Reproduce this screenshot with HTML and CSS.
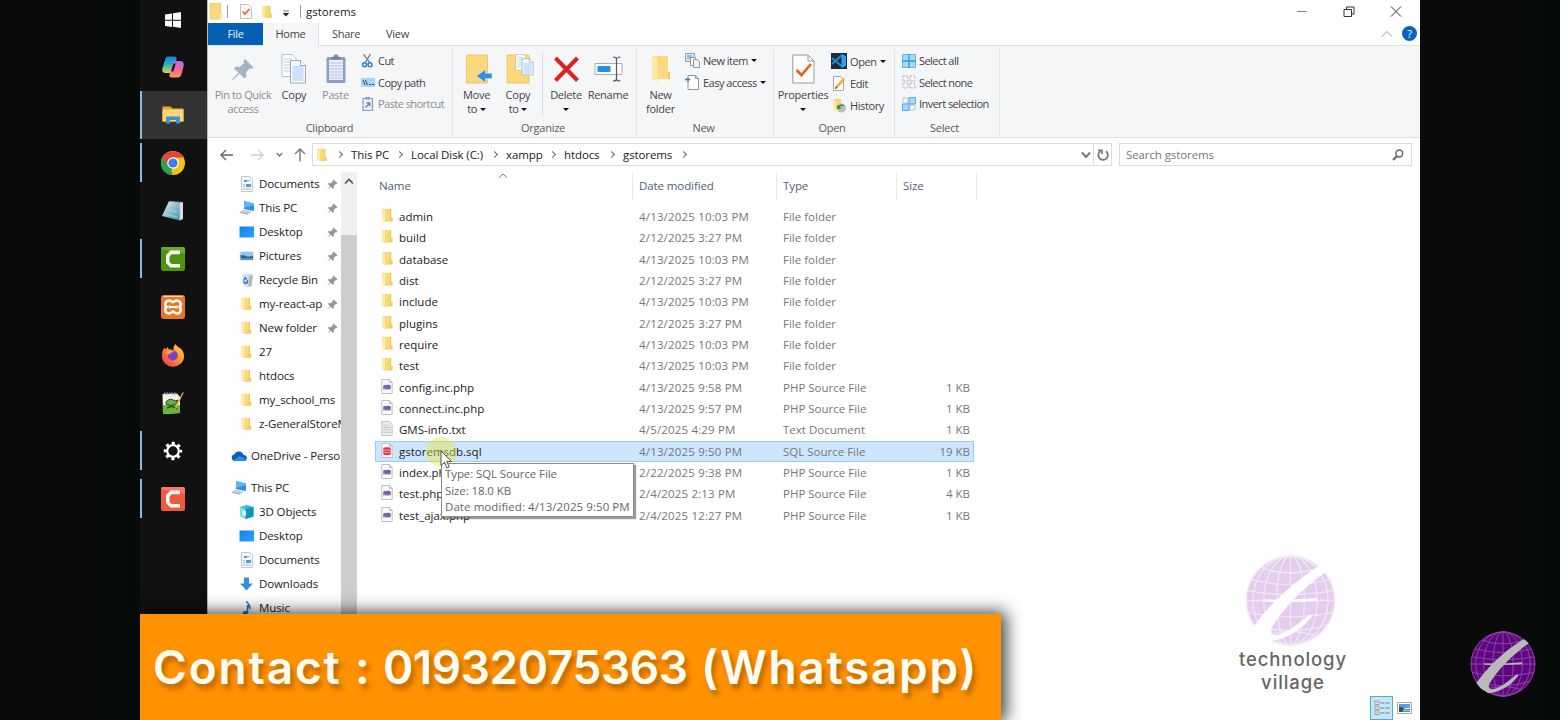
FILE: index.html
```html
<!DOCTYPE html>
<html lang="en">
<head>
<meta charset="utf-8">
<title>gstorems</title>
<link rel="stylesheet" href="styles.css">
</head>
<body>
<svg class="defs" width="0" height="0">
  <defs>
    <linearGradient id="gblue" x1="0" y1="0" x2="1" y2="1"><stop offset="0" stop-color="#0a84e8"/><stop offset="1" stop-color="#2fa4fb"/></linearGradient>
    <linearGradient id="gcopa" x1="0" y1="0" x2="0" y2="1"><stop offset="0" stop-color="#1c7fe0"/><stop offset=".5" stop-color="#2fb4b8"/><stop offset="1" stop-color="#e9cf3c"/></linearGradient>
    <linearGradient id="gcopb" x1="0" y1="0" x2="0" y2="1"><stop offset="0" stop-color="#b569e8"/><stop offset=".5" stop-color="#f0659a"/><stop offset="1" stop-color="#fb9a55"/></linearGradient>
    <linearGradient id="gff" x1="1" y1="0" x2="0" y2="1"><stop offset="0" stop-color="#ffe14a"/><stop offset=".5" stop-color="#ff8a2a"/><stop offset="1" stop-color="#f5285e"/></linearGradient>
    <linearGradient id="gnote" x1="0" y1="0" x2="1" y2="1"><stop offset="0" stop-color="#e6f3f6"/><stop offset="1" stop-color="#3f8ea6"/></linearGradient>
  </defs>
  <symbol id="folder" viewBox="0 0 14 16"><path d="M2 1h9.500v9H13v4.500H5z" fill="#f3c863"/><path d="M2 1h8v12.500H2z" fill="#f9d978"/><path d="M2 1l3 1.500V15.500L2 13.500z" fill="#ffebae"/></symbol>
  <symbol id="page" viewBox="0 0 14 16"><path d="M1.500.5h8l3 3v12h-11z" fill="#fbfbfd" stroke="#b9b9c0"/><path d="M9.500.5v3h3" fill="none" stroke="#b9b9c0"/></symbol>
  <symbol id="php" viewBox="0 0 14 16"><use href="#page"/><path d="M3 7c1-.8 2-.8 3-.4 1.500-.6 4.800-.5 5 .9v3.500h-1V9.500l-1 2H7.700V10.500H6.500v1H5V10l-.7-.5V11H3z" fill="#7a5fae"/></symbol>
  <symbol id="sql" viewBox="0 0 14 16"><use href="#page"/><path d="M3 5.500c0-1.300 8-1.300 8 0v6.500c0 1.300-8 1.300-8 0z" fill="#e6394f"/><path d="M3 7c2 1 6 1 8 0M3 9.500c2 1 6 1 8 0" stroke="#fff" stroke-width=".7" fill="none" opacity=".7"/></symbol>
  <symbol id="txt" viewBox="0 0 14 16"><path d="M1.500.5h8l3 3v12h-11z" fill="#eeeeef" stroke="#c0c0c0"/><path d="M3 4.500h6M3 7h8M3 9.500h8M3 12h8" stroke="#bcc0c3"/></symbol>
  <symbol id="doc" viewBox="0 0 16 16"><path d="M2.500.5h8l3 3v12h-11z" fill="#f6f9fc" stroke="#c3c7cc"/><path d="M5 4h3v2H5zM7 8h5v3H7z" fill="#4b9fdc"/><path d="M8 4.500h3M4 8.500h2M4 10.500h2M4 13h8" stroke="#9dbbd3"/></symbol>
  <symbol id="pc" viewBox="0 0 16 16"><path d="M5 1l10 2.500V11L5 9z" fill="#2491ea"/><path d="M5 1l10 2.500V5L5 8z" fill="#5db5f7"/><path d="M4.500 9.500l9 2-4.500 3-9-2z" fill="#c8ced3"/><path d="M1 12.400l8 1.600" stroke="#8d979f" stroke-width=".7"/></symbol>
  <symbol id="desk" viewBox="0 0 16 16"><path d="M.5 2.500h14.500v11H.5z" fill="url(#gblue)"/></symbol>
  <symbol id="pic" viewBox="0 0 16 16"><path d="M.5 3h14.500v10H.5z" fill="#e2edf5"/><path d="M1.500 4h12.500v4H1.500z" fill="#8fc6ec"/><path d="M1.500 7l4 .5 3 1 5.500-.5v2.500H1.500z" fill="#2b5f85"/><path d="M1.500 10h12.500v2H1.500z" fill="#5a94bd"/></symbol>
  <symbol id="bin" viewBox="0 0 16 16"><path d="M3 3l7-2 4 2-1.500 11-4 1.500L4 13z" fill="#d9dfe4"/><path d="M10 4l4-1-1.500 11-3 1z" fill="#aeb8c0"/><path d="M4.500 8.500l1.700-2.700 1.700 1.700M8.500 8l-.3 3H5.500L4.700 9" fill="none" stroke="#1c77d2" stroke-width="1.300"/></symbol>
  <symbol id="cloud" viewBox="0 0 16 16"><path d="M3.500 13a3.500 3.500 0 0 1-.2-6.800A5 5 0 0 1 12.500 7 3 3 0 0 1 13 13z" fill="#0f5fbf"/><path d="M2 12.500L8.500 8l6.800 3.500c-.5 1-1.300 1.500-2.300 1.500H3.500z" fill="#2191e8"/></symbol>
  <symbol id="cube" viewBox="0 0 16 16"><path d="M1 3l7-2 6.500 2v9.500L7 15 1 12z" fill="#37b7d8"/><path d="M1 3l5.500 2V15L1 12z" fill="#7be0ee"/><path d="M6.500 5l8-2v9.500L6.500 15z" fill="#1693bd"/><path d="M3.500 6l3.500 1v5L3.500 11z" fill="#dff9fc"/></symbol>
  <symbol id="down" viewBox="0 0 16 16"><path d="M5 1.500h5v6h4L7.500 14.500 1 7.500h4z" fill="#3a8fdc"/></symbol>
  <symbol id="music" viewBox="0 0 16 16"><path d="M7.500 1c.5 3 4.500 3.500 3.500 8-.5-2-1.700-3-2.500-3.200V13" fill="none" stroke="#1d7fc4" stroke-width="1.500"/><ellipse cx="6.300" cy="13" rx="2.700" ry="2" fill="#1d7fc4"/></symbol>
  <symbol id="pin" viewBox="0 0 11 11"><path d="M6.500.5l4 4-1 .8-.8-.2-2 2 .2 2-1 .9-2.300-2.300L.7 10.600l-.3-.3L3.200 7.300.9 5l.9-1 2.100.2 2-2-.3-.9z" fill="#8f969e"/></symbol>
  <symbol id="twin" viewBox="0 0 26 30"><path d="M1 .5h10l4 4v18H1z" fill="#fff" stroke="#a9adb3" stroke-width=".8"/><path d="M3 5h8M3 8h9M3 11h9M3 14h9M3 17h9" stroke="#a9cbea"/><path d="M9.500 6.500h10l5 5v17.500h-15z" fill="#f8fbfe" stroke="#8c949c" stroke-width=".8"/><path d="M11.500 12h11v15h-11z" fill="#cbe3f8"/><path d="M19.500 6.500v5h5" fill="#fff" stroke="#8c949c" stroke-width=".8"/></symbol>
  <symbol id="globe" viewBox="0 0 92 92">
    <circle cx="46" cy="46" r="45" class="g-fill"/>
    <g class="g-line"><path d="M46 1v90M1 46h90M7 25q39 10 78 0M3 36q43 8 86 0M3 58q43 9 86 0M8 70q38 13 76 0M17 13q29 10 58 0M20 82q26-9 52 0"/><ellipse cx="46" cy="46" rx="14" ry="45"/><ellipse cx="46" cy="46" rx="27" ry="45"/><ellipse cx="46" cy="46" rx="38" ry="45"/><circle cx="46" cy="46" r="44.500"/></g>
    <path class="g-mark" d="M75 11C50 26 22 52 9 73L15 80 25 86.500C38 87 58 76 67.500 62L66 60C54 69 42 80 32 81 25 81.500 25 77 28 72 39 54 60 32 82 17z"/>
    <path class="g-mark" d="M20 45q26 1 52-1.500l1 3q-27 1.500-53 .5z"/>
  </symbol>
</svg>

<div class="stage">
  <div class="bezel"></div>
  <div class="screen">
    <div class="taskbar">
      <div class="task"><svg width="24" height="24" viewBox="0 0 24 24"><path d="M4 6.500l7-1v6.200H4zM12 5.300L20 4v7.700h-8zM4 12.700h7v6.200l-7-1zM12 12.700h8V20l-8-1.200z" fill="#fff"/></svg></div>
      <div class="task"><svg width="24" height="24" viewBox="0 0 24 24"><path d="M7 1.500h6c2 0 3 1 2.500 3L12 15.500c-.6 1.600-1.500 2.500-3 2.500H5c-3 0-4.500-1.500-3.500-5L4 5C4.500 2.500 5.500 1.500 7 1.500z" fill="url(#gcopa)"/><path d="M15 6h4c3 0 4.500 2 3.500 5.500l-2 7.500c-.7 2.500-2 3.500-4 3.500h-6c-2 0-2.500-1.500-2-3l3-10C12.200 7.500 13 6 15 6z" fill="url(#gcopb)"/><path d="M12.500 8.500h2.200l-2.400 8h-2.200z" fill="#151515"/></svg></div>
      <div class="task task--active"><svg width="24" height="24" viewBox="0 0 24 24"><path d="M1.500 3.500h8l2 2h11v13h-21z" fill="#e9a62c"/><path d="M1.500 6.500h21v12h-21z" fill="#ffd575"/><path d="M5 20.500v-7h14v7h-4v-3.500H9v3.500z" fill="#3b93d6"/></svg></div>
      <div class="task task--open"><svg width="24" height="24" viewBox="0 0 24 24"><circle cx="12" cy="12" r="12" fill="#fbc116"/><path d="M12 12l-.2 12A12 12 0 0 1 1.600 6L7 15z" fill="#2ba24c"/><path d="M12 24l5-9-5-3-5 3 4 6z" fill="#fbc116"/><path d="M1.600 6A12 12 0 0 1 22.400 6.500H12L7 15z" fill="#e94335"/><path d="M1.600 6L7 15l4.500 2.500L8 23.300A12 12 0 0 1 1.600 6z" fill="#2ba24c"/><circle cx="12" cy="12" r="5.800" fill="#fff"/><circle cx="12" cy="12" r="4.600" fill="#3b7ded"/></svg></div>
      <div class="task"><svg width="24" height="24" viewBox="0 0 24 24"><path d="M8 2l11 1 0 18.500L1 17z" fill="url(#gnote)"/><path d="M19 3l3 .3V20l-3.500 1.500z" fill="#d8dcdc"/><path d="M8 2.500l13 .8" stroke="#8b6f5a" stroke-dasharray="1.500 1.200"/><path d="M5 11l12 2M3 15l14 3" stroke="#a9d6e0" stroke-width=".8"/></svg></div>
      <div class="task task--open"><svg width="24" height="24" viewBox="0 0 24 24"><rect width="24" height="24" rx="2" fill="#4c940c"/><path d="M0 2a2 2 0 0 1 2-2h20a2 2 0 0 1 2 2v5z" fill="#69ad20"/><path d="M19 3.500v3.800h-8.500L8.500 9.500v5.500l2 2H19v3.500H9.500l-4.500-4.500V8l4.500-4.500z" fill="#fff"/></svg></div>
      <div class="task"><svg width="24" height="24" viewBox="0 0 24 24"><rect width="24" height="24" rx="3" fill="#ee7522"/><path d="M2 1.500h20" stroke="#ffd1a8" stroke-width="1.200"/><path d="M8.500 5.500c1.500 0 2.500 1.500 3.500 1.500s2-1.500 3.500-1.500c4 0 5.500 4 3 6.500 2.500 2.500 1 6.500-3 6.500-1.500 0-2.500-2-3.500-2s-2 2-3.500 2c-4 0-5.500-4-3-6.500-2.500-2.500-1-6.500 3-6.500z" fill="none" stroke="#fff" stroke-width="2.500"/><path d="M8.500 10.500v3M15.500 10.500v3M8.500 12h7" stroke="#fff" stroke-width="2"/></svg></div>
      <div class="task"><svg width="24" height="24" viewBox="0 0 24 24"><path d="M3 5l2 1 1.500-2L8 6.500C10 6 11 7 12 8l1-5 1.500-2C16 4 18 4 20 6c2 2 3 4 3 7.500A11 10.500 0 0 1 1 13c0-3 .5-6 2-8z" fill="url(#gff)"/><circle cx="11.800" cy="12.500" r="5" fill="#7543c8"/><path d="M5 9c3-2.500 7-2 8 0-3 0-3.500 2-6 2.500z" fill="#ffa03a"/></svg></div>
      <div class="task"><svg width="24" height="24" viewBox="0 0 24 24"><path d="M1.500 3l14.500-.5L19 6v16L2 23z" fill="#edf3ea"/><path d="M2 14h17v8L2 23z" fill="#6db832"/><path d="M3 2.500h12" stroke="#9a9a9a" stroke-dasharray="1.500 1" stroke-width="2"/><path d="M5 11q4-5 9-1l3-1-2 4q-5 3-10 0z" fill="#6fae3e" stroke="#204d18"/><path d="M6 17l5-2 5 3" stroke="#1c4f1a" stroke-width="1.500" fill="none"/><path d="M23 1l-7.500 16-1 2.500L14 17 21 2z" fill="#e7a53e"/></svg></div>
      <div class="task task--open"><svg width="24" height="24" viewBox="0 0 24 24"><circle cx="12" cy="12" r="5.800" fill="none" stroke="#fff" stroke-width="2.200"/><circle cx="12" cy="12" r="7.700" fill="none" stroke="#fff" stroke-width="3" stroke-dasharray="3 3.048" stroke-dashoffset="1.500"/></svg></div>
      <div class="task task--open"><svg width="24" height="24" viewBox="0 0 24 24"><rect width="24" height="24" rx="2" fill="#f2593b"/><path d="M0 2a2 2 0 0 1 2-2h20a2 2 0 0 1 2 2v5z" fill="#fb7a5c"/><path d="M19 3.500v3.800h-8.500L8.500 9.500v5.500l2 2H19v3.500H9.500l-4.500-4.500V8l4.500-4.500z" fill="#fff"/></svg></div>
    </div>

    <div class="window">
      <header class="titlebar">
        <svg class="t-folder" width="15" height="17" viewBox="0 0 15 17"><path d="M1 .5h10.500V11H13v5H1z" fill="#f9d97e" stroke="#e8c263" stroke-width=".8"/><path d="M11 11h2v5h-2z" fill="#ffefc0"/></svg>
        <i class="bar"></i>
        <svg class="t-check" width="12" height="15" viewBox="0 0 12 15"><path d="M.5.500h8l3 3v11H.5z" fill="#fafafa" stroke="#c3c3c3"/><path d="M2.500 7.500L5 10l4.500-5" fill="none" stroke="#e3622a" stroke-width="1.600"/></svg>
        <svg class="t-f2" width="13" height="14"><use href="#folder"/></svg>
        <svg class="t-drop" width="8" height="8" viewBox="0 0 8 8"><path d="M1 1h6" stroke="#777"/><path d="M.8 3h6.400L4 6.500z" fill="#222"/></svg>
        <i class="bar bar--2"></i>
        <span class="title">gstorems</span>
        <div class="winbtns">
          <svg width="12" height="12" viewBox="0 0 12 12"><path d="M1 5.500h10" stroke="#888"/></svg>
          <svg width="12" height="12" viewBox="0 0 12 12"><path d="M1 3.500h7.500V10.500H1zM3.500 3.500V1H11v7H8.500" fill="none" stroke="#333"/></svg>
          <svg width="12" height="12" viewBox="0 0 12 12"><path d="M1 .5l10 10M11 .5L1 10.500" stroke="#333"/></svg>
        </div>
      </header>
      <nav class="tabs">
        <span class="tab tab--file">File</span><span class="tab tab--home">Home</span><span class="tab tab--share">Share</span><span class="tab tab--view">View</span>
        <div class="tabs-right">
          <svg width="12" height="8" viewBox="0 0 12 8"><path d="M1 6.500l5-5 5 5" fill="none" stroke="#999"/></svg>
          <span class="help">?</span>
        </div>
      </nav>

      <section class="ribbon">
        <div class="group g-clip">
          <div class="cmds">
            <div class="big w60 dim"><svg width="24" height="30" viewBox="0 0 24 30"><path d="M14 5l8.500 8.500-2 1.500-2-.5-3.500 4 .5 4-2 2-5-5L2 26l-.8-.8L7.500 18.500 3 14.500l1.800-2 4 .5L13 9l-.5-2.500z" fill="#a5b2ca"/></svg><span>Pin to Quick<br>access</span></div>
            <div class="big w42"><svg width="26" height="30"><use href="#twin"/></svg><span>Copy</span></div>
            <div class="big w40 dim"><svg width="22" height="30" viewBox="0 0 22 30"><rect x="1.500" y="3" width="19" height="26" rx="1.500" fill="#8e9fc4"/><path d="M4 6h14v20H4z" fill="#e9eef8"/><path d="M4 9h14M4 12h14M4 15h14M4 18h14M4 21h14M4 24h14" stroke="#b9c5e0"/><path d="M6 5.500V3h2.500a2.500 2.500 0 0 1 5 0H16v2.500z" fill="#77859f"/></svg><span>Paste</span></div>
            <div class="small">
              <div><svg width="14" height="14" viewBox="0 0 14 14"><path d="M2.500 0L9 9M9.500 0L4 9" stroke="#7d8792" stroke-width="1.400"/><circle cx="3.500" cy="10.800" r="2" fill="none" stroke="#2683cf" stroke-width="1.500"/><circle cx="9" cy="10.800" r="2" fill="none" stroke="#2683cf" stroke-width="1.500"/></svg>Cut</div>
              <div><svg width="14" height="9" viewBox="0 0 14 9"><path d="M0 0h14v9H0z" fill="#a9d6f7"/><path d="M2 2l2 5M4.500 2l2 5M8 6.500h2M11 6.500h2" stroke="#1c4b78"/></svg>Copy path</div>
              <div class="dim"><svg width="14" height="15" viewBox="0 0 14 15"><path d="M2 2.500h9.500v12H2z" fill="#e9eef8" stroke="#8b9cc0" stroke-width="1.200"/><path d="M4.500 1h4.500v2.500H4.500z" fill="#8b9cc0"/><path d="M4.500 11.500l4-4M5.500 7h3.300v3.300" stroke="#6e82ad" stroke-width="1.300" fill="none"/></svg>Paste shortcut</div>
            </div>
          </div>
          <p>Clipboard</p>
        </div>
        <div class="group g-org">
          <div class="cmds">
            <div class="big w40"><svg class="nudge" width="28" height="30" viewBox="0 0 28 30"><path d="M1.500 1h21v28h-21z" fill="#fbd87c" stroke="#efc865"/><path d="M20.500 15.500v3.800h6.500v5.200h-6.500V28.500l-9-6.500z" fill="#2f8fe0" stroke="#fff" stroke-width=".4"/></svg><span>Move<br>to <b></b></span></div>
            <div class="big w42"><svg class="nudge" width="28" height="30" viewBox="0 0 28 30"><path d="M1 1h22v28H1z" fill="#fbd87c" stroke="#efc865"/><g transform="translate(9 0) scale(.74 .72)"><use href="#twin" width="26" height="30"/></g></svg><span>Copy<br>to <b></b></span></div>
            <i class="vsep"></i>
            <div class="big w42"><svg width="28" height="30" viewBox="0 0 28 30"><path d="M3.500 4L25.500 26.500M25.500 4L3.500 26.500" stroke="#df2020" stroke-width="4"/></svg><span>Delete<br><b></b></span></div>
            <div class="big w42"><svg width="29" height="30" viewBox="0 0 29 30"><path d="M1 9.500h27v11H1z" fill="#fff" stroke="#a8adb2"/><path d="M3.500 12h13v6h-13z" fill="#2c8fe6"/><path d="M19 3c2 0 3.500.5 3.500 2v20c0 1.500-1.500 2-3.500 2M26.500 3c-2 0-4 .5-4 2M22.500 25c0 1.500 2 2 4 2" fill="none" stroke="#555" stroke-width="1.200"/></svg><span>Rename</span></div>
          </div>
          <p>Organize</p>
        </div>
        <div class="group g-new">
          <div class="cmds">
            <div class="big w40"><svg width="20" height="30" viewBox="0 0 20 30"><path d="M3 2h14v16h2v7H6z" fill="#f2c763"/><path d="M4 2h13v23H4z" fill="#fbd97f"/><path d="M1 1.500l5.500 3v24L1 25z" fill="#ffe9a8"/></svg><span>New<br>folder</span></div>
            <div class="small">
              <div><svg width="15" height="15" viewBox="0 0 15 15"><path d="M.5.500h9v8h-9z" fill="#d5e7f5" stroke="#8aa2b6"/><path d="M2 3h5M2 5h5" stroke="#4a90c8"/><path d="M5.500 4.500h5v8h-5z" fill="#fff" stroke="#999"/><path d="M8.500 6.500h4l2 2v6h-6z" fill="#e8f1f8" stroke="#999"/></svg>New item <b></b></div>
              <div><svg width="15" height="15" viewBox="0 0 15 15"><path d="M3 .5h7.500l3 3v11H3z" fill="#fff" stroke="#8f959b"/><path d="M10.500.5v3h3" fill="none" stroke="#8f959b"/><path d="M0 5q3-2 5 0M3 3v4" fill="none" stroke="#2683cf" stroke-width="1.300"/></svg>Easy access <b></b></div>
            </div>
          </div>
          <p>New</p>
        </div>
        <div class="group g-open">
          <div class="cmds">
            <div class="big w54"><svg width="23" height="30" viewBox="0 0 23 30"><path d="M.8 1H16l6 6v22H.8z" fill="#fdfdfd" stroke="#9b9b9b"/><path d="M16 1v6h6" fill="none" stroke="#9b9b9b"/><path d="M4.500 16l5 5L19 10" fill="none" stroke="#e5611f" stroke-width="2.600"/></svg><span>Properties<br><b></b></span></div>
            <div class="small">
              <div><svg width="16" height="16" viewBox="0 0 16 16"><path d="M0 0h16v16H0z" fill="#1f2a36"/><path d="M1 5l10 8.500M1 11L11 2" stroke="#1c86d4" stroke-width="2.200"/><path d="M10.500 1L15 3v10l-4.500 2z" fill="#2ba0ee"/></svg>Open <b></b></div>
              <div><svg width="16" height="15" viewBox="0 0 16 15"><path d="M2.500.500h7l3 3v11h-10z" fill="#fff" stroke="#a5a5a5"/><path d="M4 13l.8-3L12 2l2 2-7.500 8z" fill="#eab23c"/><path d="M4 13l.8-3 1.700 2z" fill="#555"/></svg>Edit</div>
              <div><svg width="16" height="15" viewBox="0 0 16 15"><path d="M2 1h8v11H2z" fill="#f8d471"/><path d="M2 1l3 1.500V14L2 12z" fill="#ffe9a8"/><circle cx="10.500" cy="10" r="4.500" fill="#b9bfbf"/><path d="M7.500 9.500a3 3 0 0 1 5-1.500M6.500 7.500l.6 2.800 2.700-.6" fill="none" stroke="#2f8f2f" stroke-width="1.500"/></svg>History</div>
            </div>
          </div>
          <p>Open</p>
        </div>
        <div class="group g-sel">
          <div class="cmds">
            <div class="small">
              <div><svg width="14" height="14" viewBox="0 0 14 14"><path d="M.5.500h13v13H.5z" fill="#a8d6fa" stroke="#6cb1e8"/><path d="M7 0v14M0 7h14" stroke="#3f93da" stroke-width="1.300"/></svg>Select all</div>
              <div><svg width="14" height="14" viewBox="0 0 14 14"><path d="M1 1h5v5H1zM8 1h5v5H8zM1 8h5v5H1zM8 8h5v5H8z" fill="#f8f8f8" stroke="#b5b5b5" stroke-dasharray="2 1"/></svg>Select none</div>
              <div><svg width="14" height="14" viewBox="0 0 14 14"><path d="M1 1h5v5H1zM8 8h5v5H8z" fill="#fafafa" stroke="#b9bec4"/><path d="M7 .5h6.500V7H7zM.5 7H7v6.500H.5z" fill="#a8d6fa" stroke="#62a9e2"/></svg>Invert selection</div>
            </div>
          </div>
          <p>Select</p>
        </div>
      </section>

      <div class="address">
        <svg class="a-back" width="13" height="12" viewBox="0 0 13 12"><path d="M6 1L1 6l5 5M1 6h12" fill="none" stroke="#666" stroke-width="1.400"/></svg>
        <svg class="a-fwd" width="13" height="12" viewBox="0 0 13 12"><path d="M7 1l5 5-5 5M12 6H0" fill="none" stroke="#d0d0d0" stroke-width="1.400"/></svg>
        <svg class="a-drop" width="7" height="6" viewBox="0 0 7 6"><path d="M.8 1l2.700 3L6.200 1" fill="none" stroke="#777" stroke-width="1.500"/></svg>
        <svg class="a-up" width="12" height="14" viewBox="0 0 12 14"><path d="M1 6l5-5 5 5M6 1v12.500" fill="none" stroke="#777" stroke-width="1.400"/></svg>
        <div class="path">
          <svg class="p-f" width="13" height="14"><use href="#folder"/></svg>
          <i></i><span class="c1">This PC</span><i></i><span class="c2">Local Disk (C:)</span><i></i><span class="c3">xampp</span><i></i><span class="c4">htdocs</span><i></i><span class="c5">gstorems</span><i></i>
          <svg class="p-drop" width="10" height="8" viewBox="0 0 10 8"><path d="M1 1.500L5 6l4-4.500" fill="none" stroke="#777" stroke-width="2"/></svg>
        </div>
        <div class="refresh"><svg width="12" height="12" viewBox="0 0 12 12"><path d="M9 2.200A4.800 4.800 0 1 1 3.500 2" fill="none" stroke="#777" stroke-width="1.700"/><path d="M1 1.300h4v4" fill="none" stroke="#777" stroke-width="1.600"/></svg></div>
        <div class="search"><span>Search gstorems</span><svg width="12" height="12" viewBox="0 0 12 12"><circle cx="7.300" cy="4.500" r="3.400" fill="none" stroke="#666" stroke-width="1.500"/><path d="M5 7L1 11" stroke="#666" stroke-width="2"/></svg></div>
      </div>

      <main class="content">
        <aside class="tree">
          <div class="node"><svg><use href="#doc"/></svg><span>Documents</span><svg class="pin"><use href="#pin"/></svg></div>
          <div class="node"><svg><use href="#pc"/></svg><span>This PC</span><svg class="pin"><use href="#pin"/></svg></div>
          <div class="node"><svg><use href="#desk"/></svg><span>Desktop</span><svg class="pin"><use href="#pin"/></svg></div>
          <div class="node"><svg><use href="#pic"/></svg><span>Pictures</span><svg class="pin"><use href="#pin"/></svg></div>
          <div class="node"><svg><use href="#bin"/></svg><span>Recycle Bin</span><svg class="pin"><use href="#pin"/></svg></div>
          <div class="node"><svg class="f"><use href="#folder"/></svg><span>my-react-ap</span><svg class="pin"><use href="#pin"/></svg></div>
          <div class="node"><svg class="f"><use href="#folder"/></svg><span>New folder</span><svg class="pin"><use href="#pin"/></svg></div>
          <div class="node"><svg class="f"><use href="#folder"/></svg><span>27</span></div>
          <div class="node"><svg class="f"><use href="#folder"/></svg><span>htdocs</span></div>
          <div class="node"><svg class="f"><use href="#folder"/></svg><span>my_school_ms</span></div>
          <div class="node"><svg class="f"><use href="#folder"/></svg><span>z-GeneralStoreM</span></div>
          <div class="node node--root"><svg><use href="#cloud"/></svg><span>OneDrive - Perso</span></div>
          <div class="node node--root"><svg><use href="#pc"/></svg><span>This PC</span></div>
          <div class="node"><svg><use href="#cube"/></svg><span>3D Objects</span></div>
          <div class="node"><svg><use href="#desk"/></svg><span>Desktop</span></div>
          <div class="node"><svg><use href="#doc"/></svg><span>Documents</span></div>
          <div class="node"><svg><use href="#down"/></svg><span>Downloads</span></div>
          <div class="node"><svg><use href="#music"/></svg><span>Music</span></div>
        </aside>
        <div class="scroll"><svg width="10" height="7" viewBox="0 0 10 7"><path d="M1 5.500l4-4 4 4" fill="none" stroke="#555" stroke-width="1.700"/></svg><div class="thumb"></div></div>
        <section class="files">
          <div class="head"><svg class="sort" width="10" height="5" viewBox="0 0 10 5"><path d="M1 4.500l4-3.500 4 3.500" fill="none" stroke="#777"/></svg><span>Name</span><span>Date modified</span><span>Type</span><span>Size</span></div>
          <div class="row"><svg><use href="#folder"/></svg><span>admin</span><span>4/13/2025 10:03 PM</span><span>File folder</span><span></span></div>
          <div class="row"><svg><use href="#folder"/></svg><span>build</span><span>2/12/2025 3:27 PM</span><span>File folder</span><span></span></div>
          <div class="row"><svg><use href="#folder"/></svg><span>database</span><span>4/13/2025 10:03 PM</span><span>File folder</span><span></span></div>
          <div class="row"><svg><use href="#folder"/></svg><span>dist</span><span>2/12/2025 3:27 PM</span><span>File folder</span><span></span></div>
          <div class="row"><svg><use href="#folder"/></svg><span>include</span><span>4/13/2025 10:03 PM</span><span>File folder</span><span></span></div>
          <div class="row"><svg><use href="#folder"/></svg><span>plugins</span><span>2/12/2025 3:27 PM</span><span>File folder</span><span></span></div>
          <div class="row"><svg><use href="#folder"/></svg><span>require</span><span>4/13/2025 10:03 PM</span><span>File folder</span><span></span></div>
          <div class="row"><svg><use href="#folder"/></svg><span>test</span><span>4/13/2025 10:03 PM</span><span>File folder</span><span></span></div>
          <div class="row"><svg><use href="#php"/></svg><span>config.inc.php</span><span>4/13/2025 9:58 PM</span><span>PHP Source File</span><span>1 KB</span></div>
          <div class="row"><svg><use href="#php"/></svg><span>connect.inc.php</span><span>4/13/2025 9:57 PM</span><span>PHP Source File</span><span>1 KB</span></div>
          <div class="row"><svg><use href="#txt"/></svg><span>GMS-info.txt</span><span>4/5/2025 4:29 PM</span><span>Text Document</span><span>1 KB</span></div>
          <div class="row row--sel"><svg><use href="#sql"/></svg><span>gstoremsdb.sql</span><span>4/13/2025 9:50 PM</span><span>SQL Source File</span><span>19 KB</span></div>
          <div class="row"><svg><use href="#php"/></svg><span>index.php</span><span>2/22/2025 9:38 PM</span><span>PHP Source File</span><span>1 KB</span></div>
          <div class="row"><svg><use href="#php"/></svg><span>test.php</span><span>2/4/2025 2:13 PM</span><span>PHP Source File</span><span>4 KB</span></div>
          <div class="row"><svg><use href="#php"/></svg><span>test_ajax.php</span><span>2/4/2025 12:27 PM</span><span>PHP Source File</span><span>1 KB</span></div>
        </section>
      </main>
    </div>

    <div class="halo"></div>
    <div class="tooltip">Type: SQL Source File<br>Size: 18.0 KB<br><span>Date modified: 4/13/2025 9:50 PM</span></div>
    <svg class="cursor" width="14" height="20" viewBox="0 0 14 20"><path d="M1 1v14.500l3.500-3.200 2.300 5.700 2.400-1-2.400-5.500h4.700z" fill="#fff" stroke="#444" stroke-width=".9"/></svg>

    <div class="watermark"><svg class="globe" width="91" height="91"><use href="#globe"/></svg><span>technology<br>village</span></div>
    <div class="views">
      <span class="view view--on"><svg width="16" height="16" viewBox="0 0 16 16"><path d="M1 1h4v3.500H1zM1 6h4v3.500H1zM1 11h4v3.500H1z" fill="#fff" stroke="#888" stroke-width=".8"/><path d="M2.500 2.800h1M2.500 7.800h1M2.500 12.800h1" stroke="#a33"/><path d="M6.500 3h4M6.500 8h4M6.500 13h4M11.500 3h4M11.500 8h4M11.500 13h4" stroke="#5a86a0"/></svg></span>
      <span class="view"><svg width="15" height="12" viewBox="0 0 15 12"><path d="M.5.500h14v11H.5z" fill="#fff" stroke="#aaa"/><path d="M2 2h11v4H2z" fill="#5d9be0"/><path d="M2 4.500q4 0 6 2.500h5v3H2z" fill="#2b5a62"/><path d="M6 7.500h7v2H6z" fill="#9cc3dc"/></svg></span>
    </div>
    <div class="banner"><p><span class="wide">Contact :</span> <span class="digits">01932075363</span> <span class="app">(Whatsapp)</span></p></div>
  </div>
  <div class="bezel bezel--r"><svg class="globe globe--dark" width="66" height="66"><use href="#globe"/></svg></div>
</div>
</body>
</html>
```

FILE: styles.css
```css
* { box-sizing: border-box; }
body { margin: 0; background: #080b09; font-family: "Open Sans", "Noto Sans", sans-serif; font-size: 11.5px; letter-spacing: -0.1px; color: #222; }
.defs { position: absolute; }
svg { flex: none; display: block; }
.stage { display: flex; width: 1560px; height: 720px; overflow: hidden; }
.bezel { width: 140px; background: linear-gradient(90deg, #0a0c0b, #060a08); }
.bezel--r { display: flex; align-items: flex-end; padding: 0 0 23px 50px; }
.screen { position: relative; display: flex; width: 1280px; height: 720px; background: #fff; overflow: hidden; }

.taskbar { width: 67px; background: #111; display: flex; flex-direction: column; }
.task { height: 48px; flex: none; display: flex; align-items: center; justify-content: center; border-left: 2px solid transparent; padding-right: 3px; padding-bottom: 1px; }
.task:first-child { height: 43px; padding-bottom: 3px; }
.task--active { background: #333; border-left-color: #86b9e4; }
.task--open { background: linear-gradient(#86b9e4, #86b9e4) -2px 4px / 2px 39px no-repeat; background-origin: padding-box; background-clip: border-box; }

.window { width: 1213px; display: flex; flex-direction: column; border-left: 1px solid #b9b9b9; background: #fff; }
.titlebar { height: 23px; display: flex; align-items: center; }
.t-folder { margin-left: 1px; }
.bar { width: 1px; height: 13px; background: #999; margin-left: 3px; }
.t-check { margin-left: 12px; }
.t-f2 { margin-left: 8px; }
.t-drop { margin: 4px 0 0 9px; }
.bar--2 { margin-left: 10px; }
.title { font-size: 11.5px; margin-left: 5px; letter-spacing: 0; }
.winbtns { margin-left: auto; display: flex; gap: 35px; padding-right: 18px; }
.tabs { height: 23px; display: flex; align-items: stretch; border-bottom: 1px solid #dfe1e4; font-size: 11px; color: #444; letter-spacing: -0.3px; }
.tab { display: flex; align-items: center; justify-content: center; padding-bottom: 1px; }
.tab--file { width: 55px; background: #0560b4; color: #e5f0fa; }
.tab--home { width: 56px; background: #f5f6f8; border-right: 1px solid #dfe1e4; margin-bottom: -1px; padding-bottom: 2px; }
.tab--share { width: 54px; }
.tab--view { width: 49px; }
.tabs-right { margin-left: auto; display: flex; align-items: center; gap: 9px; padding: 0 3px 1px 0; }
.help { width: 15px; height: 15px; border-radius: 50%; background: #0a62c0; color: #fff; font-size: 11px; line-height: 15px; text-align: center; }

.ribbon { height: 92px; display: flex; background: #f5f6f8; border-bottom: 1px solid #dcdee1; font-size: 11px; color: #444; letter-spacing: -0.25px; }
.group { margin: 3px 0 1px; border-right: 1px solid #e2e4e8; display: flex; flex-direction: column; flex: none; }
.group p { margin: auto 6px 1px 0; text-align: center; line-height: 14px; color: #5a5a5a; }
.cmds { display: flex; height: 68px; }
.g-clip { width: 245px; padding-left: 5px; }
.g-org { width: 184px; padding-left: 3px; }
.g-new { width: 137px; padding-left: 3px; }
.g-open { width: 121px; padding-left: 2px; }
.g-sel { width: 105px; padding-left: 7px; }
.g-sel p { margin-right: 12px; }
.big { display: flex; flex-direction: column; align-items: center; padding-top: 5px; line-height: 14px; text-align: center; white-space: nowrap; }
.big span { margin-top: 4px; }
.nudge { margin-left: 4px; }
.dim { color: #8a8d92; }
.w40 { width: 41px; } .w42 { width: 42px; } .w54 { width: 54px; } .w60 { width: 60px; letter-spacing: -0.4px; }
.vsep { width: 1px; background: #dcdfe3; margin: 3px 2px 0 3px; }
b { display: inline-block; border: 3px solid transparent; border-top: 3.500px solid #111; border-bottom: 0; vertical-align: 2px; }
.small { display: flex; flex-direction: column; padding-top: 1px; letter-spacing: -0.55px; }
.small > div { height: 21.500px; display: flex; align-items: center; gap: 3px; white-space: nowrap; }
.small b { margin-left: 0; }
.g-clip .small { margin-left: 5px; }
.g-new .small { margin-left: 4px; letter-spacing: -0.5px; }
.g-open .small { margin-left: 1px; letter-spacing: -0.4px; }
.g-open .small > div { height: 22px; }

.address { height: 34px; display: flex; align-items: center; padding-bottom: 1px; }
.a-back { margin-left: 12px; }
.a-fwd { margin-left: 18px; }
.a-drop { margin-left: 12px; }
.a-up { margin-left: 11px; }
.path { width: 782px; height: 23px; margin-left: 6px; border: 1px solid #dcdcdc; display: flex; align-items: center; }
.p-f { margin: 0 9px 0 2px; }
.path i { width: 5px; height: 5px; border: solid #666; border-width: 1.500px 1.500px 0 0; transform: rotate(45deg); }
.path span { white-space: nowrap; margin: 0 8px 0 9px; }
.c1 { width: 38px; } .c2 { width: 73px; } .c3 { width: 36px; } .c4 { width: 37px; } .c5 { width: 50px; }
.p-drop { margin: 0 2px 0 auto; }
.refresh { width: 18px; height: 23px; border: 1px solid #dcdcdc; border-left: 0; display: flex; align-items: center; justify-content: center; }
.search { width: 293px; height: 23px; margin-left: 7px; border: 1px solid #dcdcdc; display: flex; align-items: center; justify-content: space-between; padding: 0 7px 0 6px; color: #777; }

.content { flex: 1; display: flex; min-height: 0; overflow: hidden; }
.tree { width: 133px; overflow: hidden; }
.node { height: 24px; display: flex; align-items: center; padding-left: 31px; white-space: nowrap; }
.node > svg { width: 16px; height: 16px; }
.node > svg.f { width: 14px; height: 14px; margin-right: 2px; }
.node span { margin: 0 0 1px 4px; width: 83px; flex: none; }
.node > svg.pin { width: 11px; height: 11px; margin-left: -15px; }
.node--root { padding-left: 23px; margin: 8px 0; }
.node--root + .node--root { margin-bottom: 0; }
.scroll { width: 16px; background: #f0f0f0; display: flex; flex-direction: column; align-items: center; padding-top: 6px; }
.thumb { width: 16px; flex: 1; background: #cdcdcd; margin-top: 50px; }
.files { width: 617px; padding-left: 18px; }
.head { position: relative; display: grid; grid-template-columns: 258px 144px 120px 80px; height: 34px; padding-bottom: 6px; color: #51617a; line-height: 28px; width: 602px; }
.head span { border-right: 1px solid #e9e9e9; padding-left: 6px; }
.sort + span { padding-left: 4px; }
.head .sort { position: absolute; left: 123px; top: 1px; }
.row { display: grid; grid-template-columns: 24px 240px 144px 120px 67px; height: 21.333px; width: 599px; line-height: 21.333px; color: #777; white-space: nowrap; letter-spacing: 0; }
.row svg { width: 14px; height: 15px; margin: 2px 0 0 5px; }
.row span:nth-child(2) { color: #222; }
.row span:nth-child(3) { letter-spacing: 0.17px; }
.row span:last-child { text-align: right; }
.row--sel { background: #cce6ff; box-shadow: inset 0 0 0 1px #9bcdf5; }

.halo { position: absolute; left: 286px; top: 437px; width: 30px; height: 30px; border-radius: 50%; background: rgba(236, 230, 60, 0.450); }
.tooltip { position: absolute; left: 301px; top: 463px; width: 193px; height: 54px; padding: 2px 3px; background: #fff; border: 1px solid #8c8c8c; box-shadow: 2px 2px 1px rgba(90, 90, 90, .6); line-height: 16.500px; color: #666; white-space: nowrap; }
.tooltip span { letter-spacing: 0.07px; }
.cursor { position: absolute; left: 300px; top: 450px; }
.watermark { position: absolute; left: 1091px; top: 555px; width: 122px; display: flex; flex-direction: column; align-items: center; font: 500 18.5px/23px Inter, sans-serif; letter-spacing: 0.9px; color: #666; text-align: center; }
.watermark span { margin: 2px 0 0 2px; }
.watermark .globe { margin-right: 3px; }
.globe { --f: #e4cdec; --l: #f3e6f7; --m: #fff; }
.globe--dark { --f: #5f0680; --l: #8b4aa3; --m: #b9b9b9; }
.g-fill { fill: var(--f); }
.g-line { fill: none; stroke: var(--l); stroke-width: 1.300; }
.g-mark { fill: var(--m); }
.views { position: absolute; right: 4px; bottom: 0; display: flex; height: 24px; }
.view { width: 23px; display: flex; align-items: center; justify-content: center; }
.view--on { background: #c6e6f6; border: 1px solid #5aa7cf; }
.banner { position: absolute; left: 0; top: 614px; width: 861px; height: 106px; background: #ff9200; box-shadow: 3px 0 16px 2px rgba(0, 0, 0, .75); display: flex; align-items: center; padding: 0 0 0 13px; }
.banner p { margin: 0; font: 600 46px/1 Inter, sans-serif; color: #fffdf2; white-space: nowrap; text-shadow: 3px 5px 5px rgba(120, 60, 0, .5); }
.wide { letter-spacing: 1.8px; }
.digits { letter-spacing: -0.45px; }
.app { letter-spacing: 1.700px; margin-left: 2px; }
```
